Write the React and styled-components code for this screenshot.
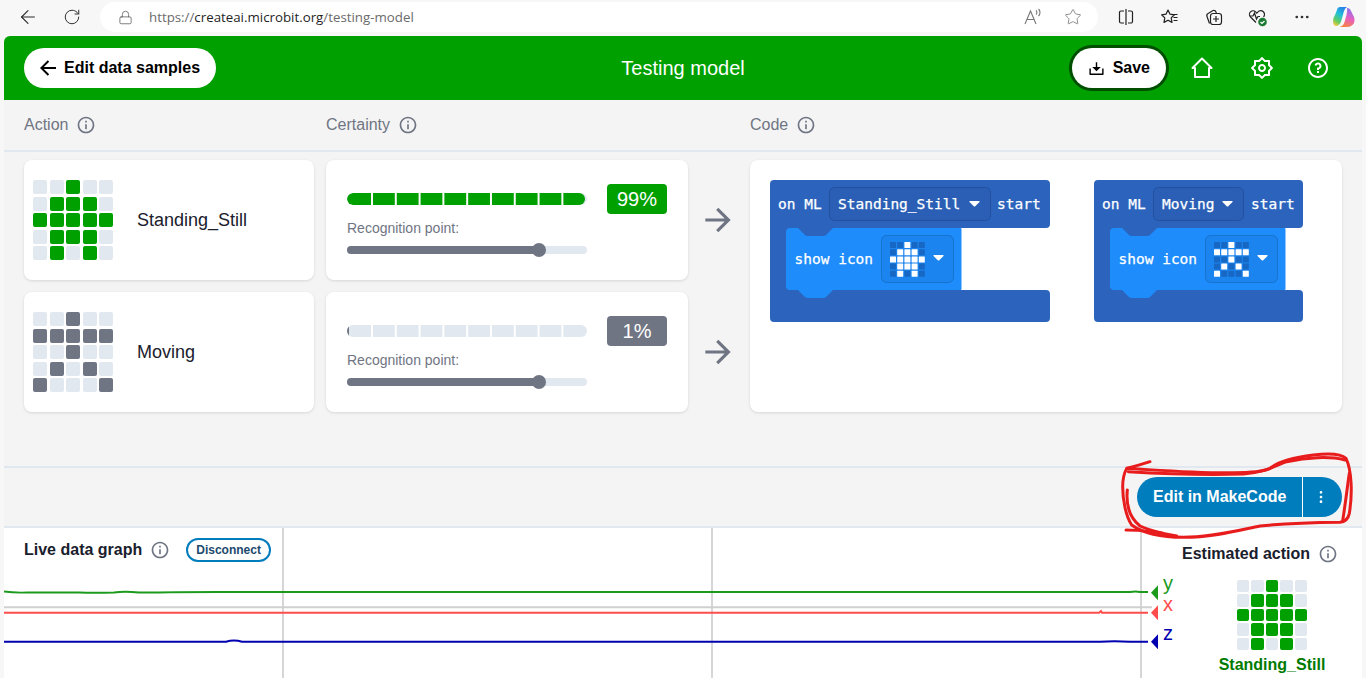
import React from "react";
import styled, { createGlobalStyle } from "styled-components";
import {
  RiArrowLeftLine,
  RiArrowRightLine,
  RiDownload2Line,
  RiInformationLine,
  RiMore2Fill,
  RiQuestionLine,
  RiSettings2Line,
} from "react-icons/ri";
import { ArrowLeft, Ellipsis, Lock, RotateCw, Star } from "lucide-react";

const GREEN = "#00a000";
const GREY = "#6f7583";
const OFF = "#e2e8f0";
const BLUE = "#007dbc";

const standing = ["..#..", ".###.", "#####", ".###.", ".#.#."];
const moving = ["..#..", "#####", "..#..", ".#.#.", "#...#"];

const GlobalStyle = createGlobalStyle`
  html, body {
    margin: 0;
    height: 100%;
    overflow: hidden;
    background: #f7f7f7;
    font-family: "Liberation Sans", Arial, sans-serif;
  }
  #root {
    height: 100%;
  }
`;

const Page = styled.div`
  display: flex;
  flex-direction: column;
  height: 100%;
  overflow: hidden;
`;

/* browser chrome */
const Chrome = styled.div`
  display: flex;
  align-items: center;
  flex: 0 0 36px;
  height: 36px;
  padding-bottom: 2px;
  box-sizing: border-box;
  color: #2b2b2b;
`;

const ChromeButton = styled.div`
  display: flex;
  align-items: center;
  justify-content: center;
  flex: 0 0 ${(p) => p.$w || 44}px;
  height: 30px;
`;

const NavGroup = styled.div`
  display: flex;
  flex: 0 0 100px;
  padding-left: 6px;
  box-sizing: border-box;
`;

const UrlPill = styled.div`
  display: flex;
  align-items: center;
  flex: 0 0 998px;
  height: 30px;
  background: #fff;
  border-radius: 15px;
  padding-left: 18px;
  box-sizing: border-box;
  color: #555;
`;

const UrlText = styled.div`
  font-family: "Open Sans", sans-serif;
  font-size: 13.3px;
  margin-left: 16px;
  color: #6b6b6b;
  flex: 1;
  b {
    font-weight: 400;
    color: #1f1f1f;
  }
`;

const PillTools = styled.div`
  display: flex;
  align-items: center;
  margin-right: 5px;
`;

const ChromeTools = styled.div`
  display: flex;
  align-items: center;
  padding-left: 6px;
`;

/* app frame */
const Frame = styled.div`
  display: flex;
  flex-direction: column;
  flex: 1;
  margin: 0 4px;
  min-height: 0;
  background: #f4f4f4;
  border-radius: 6px 6px 0 0;
  overflow: hidden;
`;

const Header = styled.header`
  display: flex;
  align-items: center;
  justify-content: space-between;
  position: relative;
  flex: 0 0 64px;
  padding: 0 12px 0 20px;
  background: ${GREEN};
  color: #fff;
`;

const Title = styled.h1`
  position: absolute;
  left: 0;
  right: 0;
  margin: 0;
  text-align: center;
  font-size: 20px;
  font-weight: 400;
  pointer-events: none;
`;

const PillButton = styled.button`
  display: flex;
  align-items: center;
  gap: ${(p) => p.$gap}px;
  height: 40px;
  padding: 0 16px 0 ${(p) => p.$left}px;
  border: 0;
  border-radius: 20px;
  background: #fff;
  color: #000;
  font: bold 16px "Liberation Sans", Arial, sans-serif;
  box-shadow: ${(p) => (p.$focus ? "0 0 0 3px #004f00" : "none")};
`;

const HeaderTools = styled.div`
  display: flex;
  align-items: center;
`;

const HeaderIcon = styled.div`
  display: flex;
  align-items: center;
  justify-content: center;
  width: ${(p) => p.$w}px;
  color: #fff;
`;

const Columns = styled.div`
  display: flex;
  align-items: center;
  flex: 0 0 50px;
  padding-left: 20px;
  border-bottom: 2px solid ${OFF};
`;

const ColumnTitle = styled.div`
  display: flex;
  align-items: center;
  gap: 8px;
  flex: 0 0 ${(p) => p.$w}px;
  font-size: 16px;
  color: ${GREY};
`;

const Main = styled.div`
  display: flex;
  flex: 0 0 306px;
  padding: 8px 20px 0;
  border-bottom: 2px solid ${OFF};
`;

const Rows = styled.div`
  display: flex;
  flex-direction: column;
  gap: 12px;
`;

const Row = styled.div`
  display: flex;
  gap: 12px;
  height: 120px;
`;

const Card = styled.div`
  background: #fff;
  border-radius: 8px;
  box-shadow: 0 1px 3px rgba(0, 0, 0, 0.12);
`;

const ActionCard = styled(Card)`
  display: flex;
  align-items: center;
  gap: 24px;
  width: 290px;
  padding-left: 9px;
  box-sizing: border-box;
  font-size: 18px;
  color: #1a202c;
`;

const LedGrid = styled.div`
  display: grid;
  grid-template-columns: repeat(5, 1fr);
  grid-template-rows: repeat(5, 1fr);
  gap: ${(p) => p.$gap}px;
  width: ${(p) => p.$size}px;
  height: ${(p) => p.$size}px;
  margin-top: ${(p) => p.$top || 0}px;
`;

const Led = styled.span`
  border-radius: 2px;
  background: ${(p) => (p.$on ? p.$color : OFF)};
`;

const CertaintyCard = styled(Card)`
  display: flex;
  align-items: flex-start;
  gap: 20px;
  width: 362px;
  padding: 24px 21px;
  box-sizing: border-box;
`;

const Meter = styled.div`
  width: 240px;
  padding-top: 9px;
`;

const Bar = styled.div`
  position: relative;
  height: 12px;
  border-radius: 6px;
  background: ${OFF};
  overflow: hidden;

  &::after {
    content: "";
    position: absolute;
    top: 0;
    bottom: 0;
    left: 24px;
    right: 4px;
    background: linear-gradient(90deg, #fff 2px, transparent 2px) 0 0 / 23.8px 100%;
  }
`;

const BarFill = styled.div`
  height: 100%;
  border-radius: 6px;
  background: ${(p) => p.$color};
`;

const PointLabel = styled.div`
  margin-top: 15px;
  font-size: 14px;
  line-height: 16px;
  color: ${GREY};
`;

const Slider = styled.div`
  position: relative;
  margin-top: 10px;
  height: 8px;
  border-radius: 4px;
  background: ${OFF};
`;

const SliderFill = styled.div`
  height: 100%;
  border-radius: 4px;
  background: ${GREY};
`;

const Thumb = styled.span`
  position: absolute;
  top: -3px;
  width: 14px;
  height: 14px;
  margin-left: -7px;
  border-radius: 50%;
  background: ${GREY};
`;

const Percent = styled.div`
  display: flex;
  align-items: center;
  justify-content: center;
  flex: 0 0 60px;
  height: 30px;
  border-radius: 4px;
  background: ${(p) => p.$color};
  color: #fff;
  font-size: 20px;
`;

const ArrowSlot = styled.div`
  display: flex;
  align-items: center;
  justify-content: center;
  width: 38px;
  margin-left: -1px;
  margin-right: 13px;
  color: ${GREY};
`;

const CodeCard = styled(Card)`
  display: flex;
  align-items: flex-start;
  gap: 44px;
  width: 592px;
  height: 252px;
  padding: 20px;
  box-sizing: border-box;
`;

/* MakeCode blocks */
const BlockSvg = styled.svg`
  flex: none;
`;

const BlockText = styled.text`
  font-family: "DejaVu Sans Mono", monospace;
  font-size: 14.5px;
  fill: #fff;
  stroke: #fff;
  stroke-width: 0.25px;
`;

const ActionBar = styled.div`
  display: flex;
  align-items: center;
  justify-content: flex-end;
  position: relative;
  flex: 0 0 58px;
  padding-right: 20px;
  border-bottom: 2px solid ${OFF};
`;

const SplitButton = styled.div`
  display: flex;
  height: 40px;
  border-radius: 20px;
  background: ${BLUE};
  color: #fff;
  font-size: 16px;
  font-weight: bold;
`;

const SplitMain = styled.div`
  display: flex;
  align-items: center;
  padding: 0 16px;
  width: 166px;
  box-sizing: border-box;
  white-space: nowrap;
  border-right: 1px solid #fff;
`;

const SplitMenu = styled.div`
  display: flex;
  align-items: center;
  justify-content: center;
  width: 39px;
  padding-right: 4px;
  box-sizing: border-box;
`;

const Scribble = styled.svg`
  position: absolute;
  right: -4px;
  top: -18px;
  z-index: 5;
  pointer-events: none;
`;

const Bottom = styled.div`
  display: flex;
  flex: 1;
  min-height: 0;
  background: #fff;
`;

const GraphPane = styled.div`
  position: relative;
  flex: 1;
`;

const Chart = styled.svg`
  position: absolute;
  left: 0;
  top: 0;
  overflow: visible;
`;

const AxisLabel = styled.text`
  font-family: "Liberation Sans", sans-serif;
  font-size: 20px;
`;

const GraphHead = styled.div`
  display: flex;
  align-items: center;
  position: relative;
  height: 44px;
  padding-left: 20px;
`;

const BoldTitle = styled.div`
  font-size: 16px;
  font-weight: bold;
  color: #1a202c;
`;

const InfoSlot = styled.div`
  display: flex;
  margin-left: 8px;
  color: ${GREY};
`;

const Disconnect = styled.button`
  height: 24px;
  margin-left: 16px;
  padding: 0 8px;
  border: 2px solid ${BLUE};
  border-radius: 12px;
  background: #fff;
  color: #1c4a6e;
  font: bold 12px "Liberation Sans", Arial, sans-serif;
`;

const Estimate = styled.div`
  display: flex;
  flex-direction: column;
  align-items: center;
  position: relative;
  flex: 0 0 221px;
  padding: 16px 0 0 41px;
  box-sizing: border-box;
`;

const EstimateHead = styled.div`
  display: flex;
  align-items: center;
  align-self: flex-start;
  height: 20px;
`;

const EstimateLabel = styled.div`
  margin-top: 6px;
  font-size: 16px;
  font-weight: bold;
  color: #007a00;
`;

const Leds = ({ rows, color, size = 80, gap = 2.5, top }) => (
  <LedGrid $size={size} $gap={gap} $top={top}>
    {rows.join("").split("").map((c, i) => (
      <Led key={i} $on={c === "#"} $color={color} />
    ))}
  </LedGrid>
);

const Info = () => <RiInformationLine size={20} />;

const Caret = ({ x, y }) => (
  <path d={`M${x} ${y} h9 q1 0 .5 1 l-4 4 q-1 1 -2 0 l-4 -4 q-.5 -1 .5 -1z`} fill="#fff" />
);

const Block = ({ label, rows, width, dropWidth, startX }) => {
  const dropEnd = 59 + dropWidth;
  return (
    <BlockSvg width={width} height={142} viewBox={`0 0 ${width} 142`}>
      <path
        d={`M4 0H${width - 4}a4 4 0 0 1 4 4V44a4 4 0 0 1-4 4H63V56H20V110H${width - 4}a4 4 0 0 1 4 4V138a4 4 0 0 1-4 4H4a4 4 0 0 1-4-4V4a4 4 0 0 1 4-4z`}
        fill="#2c63bd"
      />
      <rect x="59.5" y="7.5" width={dropWidth} height="33" rx="5" fill="#2b5fb5" stroke="#23509f" />
      <BlockText x="8" y="29">on ML</BlockText>
      <BlockText x="68" y="29">{label}</BlockText>
      <Caret x={dropEnd - 20} y={21} />
      <BlockText x={startX} y="29">start</BlockText>
      <g transform="translate(16 48)">
        <path
          d="M4 0H12L19 7Q20 8 22 8H37Q39 8 40 7L47 0H174.500a1 1 0 0 1 1 1V61a1 1 0 0 1-1 1H47L40 69Q39 70 37 70H22Q20 70 19 69L12 62H4a4 4 0 0 1-4-4V4a4 4 0 0 1 4-4z"
          fill="#1e8cfb"
        />
        <BlockText x="8.500" y="36">show icon</BlockText>
        <rect x="95.500" y="7.500" width="72" height="47" rx="5" fill="#1c84ee" stroke="#1873cc" />
        {rows.map((r, y) =>
          r.split("").map((c, x) => (
            <rect
              key={`${x}-${y}`}
              x={104 + x * 7.2}
              y={14 + y * 7.2}
              width="6"
              height="6"
              rx="0.5"
              fill={c === "#" ? "#fff" : "#1768c4"}
            />
          ))
        )}
        <Caret x={148} y={27} />
      </g>
    </BlockSvg>
  );
};

const Home = () => (
  <svg width="24" height="24" viewBox="0 0 24 24" fill="none" stroke="#fff" strokeWidth="2">
    <path d="M12 2.500 21.500 12H19V21H5V12H2.500Z" strokeLinejoin="round" />
  </svg>
);

const ReadAloud = () => (
  <svg width="20" height="20" viewBox="0 0 20 20" fill="none" stroke="#777" strokeWidth="1.1">
    <path d="M2 17 7.500 4l5.500 13M4 12.500h7" />
    <path d="M13 3.500c1.200 1 1.200 3 0 4M15.500 2c2 2 2 5 0 7" />
  </svg>
);

const SplitView = () => (
  <svg width="18" height="18" viewBox="0 0 18 18" fill="none" stroke="#222" strokeWidth="1.2">
    <path d="M9 1v16M7 3H4a1.500 1.500 0 0 0-1.500 1.500v9A1.500 1.500 0 0 0 4 15h3M11 3h3a1.500 1.500 0 0 1 1.500 1.500v9A1.500 1.500 0 0 1 14 15h-3" />
  </svg>
);

const Favourites = () => (
  <svg width="20" height="20" viewBox="0 0 20 20" fill="none" stroke="#222" strokeWidth="1.2">
    <path d="M8 3l2 4.200 4.400.6-3.200 3.100.8 4.500L8 13.200 4 15.400l.8-4.500L1.600 7.800 6 7.200z" strokeLinejoin="round" />
    <path d="M13 7.500h4.500M13.500 10.500h4M13.500 13.500h4" />
  </svg>
);

const Collections = () => (
  <svg width="20" height="20" viewBox="0 0 20 20" fill="none" stroke="#222" strokeWidth="1.2">
    <path d="M5.500 16.500 3 9.500a2.500 2.500 0 0 1 1.500-3.200L9 3.500a2.500 2.500 0 0 1 3 1.500l.3 1" />
    <rect x="6.500" y="6.500" width="11" height="11" rx="2.500" />
    <path d="M12 9v6M9 12h6" />
  </svg>
);

const Health = () => (
  <svg width="20" height="20" viewBox="0 0 20 20" fill="none" stroke="#222" strokeWidth="1.2">
    <path d="M8 15.500 2.500 10a3.600 3.600 0 0 1 5.100-5.100l1.200 1.200 1.200-1.200A3.600 3.600 0 0 1 15.500 10" />
    <path d="M2 9h3l1.500-3 2 6L10 9.500h2" />
    <circle cx="14.500" cy="15" r="4.300" fill="#1c7a34" stroke="none" />
    <path d="M12.500 15l1.500 1.500 2.500-2.500" stroke="#fff" />
  </svg>
);

const Copilot = () => (
  <svg width="24" height="24" viewBox="0 0 24 24">
    <defs>
      <linearGradient id="cpA" x1="0.7" y1="0" x2="0.2" y2="1">
        <stop offset="0" stopColor="#2b7fe8" />
        <stop offset="0.4" stopColor="#20c0d8" />
        <stop offset="0.75" stopColor="#62cc62" />
        <stop offset="1" stopColor="#f4c93c" />
      </linearGradient>
      <linearGradient id="cpB" x1="0.6" y1="0" x2="0.3" y2="1">
        <stop offset="0" stopColor="#8a6ff0" />
        <stop offset="0.5" stopColor="#e85fc0" />
        <stop offset="1" stopColor="#f8843c" />
      </linearGradient>
    </defs>
    <path d="M8 2h7q-2 1-3 4l-2.500 9q-1 5-5 6H4q-3-.5-3-5 0-3 2-6l2-5q.5-3 3-3z" fill="url(#cpA)" />
    <path d="M15 3q3 0 4 3l3 6q1.500 5-1 7.500T15 22H7.500q4-1 5-5l2-7q1-4 .5-7z" fill="url(#cpB)" />
  </svg>
);

const Marker = ({ y, color, letter, textY }) => (
  <>
    <path d={`M1154 ${y - 7.5}V${y + 7.5}L1147 ${y}z`} fill={color} />
    <AxisLabel x="1159" y={textY} fill={color}>{letter}</AxisLabel>
  </>
);

const CertaintyRow = ({ name, rows, value, color }) => (
  <Row>
    <ActionCard>
      <Leds rows={rows} color={color} />
      {name}
    </ActionCard>
    <CertaintyCard>
      <Meter>
        <Bar>
          <BarFill $color={color} style={{ width: `${value}%` }} />
        </Bar>
        <PointLabel>Recognition point:</PointLabel>
        <Slider>
          <SliderFill style={{ width: "80%" }} />
          <Thumb style={{ left: "80%" }} />
        </Slider>
      </Meter>
      <Percent $color={color}>{value}%</Percent>
    </CertaintyCard>
    <ArrowSlot>
      <RiArrowRightLine size={42} />
    </ArrowSlot>
  </Row>
);

export default function App() {
  return (
    <Page>
      <GlobalStyle />
      <Chrome>
        <NavGroup>
          <ChromeButton><ArrowLeft size={22} strokeWidth={1.2} /></ChromeButton>
          <ChromeButton><RotateCw size={18} strokeWidth={1.3} /></ChromeButton>
        </NavGroup>
        <UrlPill>
          <Lock size={15} strokeWidth={1.2} />
          <UrlText>
            https://<b>createai.microbit.org</b>/testing-model
          </UrlText>
          <PillTools>
            <ChromeButton $w={40}><ReadAloud /></ChromeButton>
            <ChromeButton $w={40}><Star size={18} strokeWidth={1.1} color="#777" /></ChromeButton>
          </PillTools>
        </UrlPill>
        <ChromeTools>
          <ChromeButton><SplitView /></ChromeButton>
          <ChromeButton><Favourites /></ChromeButton>
          <ChromeButton><Collections /></ChromeButton>
          <ChromeButton><Health /></ChromeButton>
          <ChromeButton><Ellipsis size={18} strokeWidth={1.6} /></ChromeButton>
          <ChromeButton $w={40}><Copilot /></ChromeButton>
        </ChromeTools>
      </Chrome>

      <Frame>
        <Header>
          <PillButton $gap={4} $left={12}>
            <RiArrowLeftLine size={24} />
            Edit data samples
          </PillButton>
          <Title>Testing model</Title>
          <HeaderTools>
            <PillButton $focus $gap={8} $left={16}>
              <RiDownload2Line size={17} />
              Save
            </PillButton>
            <HeaderIcon $w={72}><Home /></HeaderIcon>
            <HeaderIcon $w={48}><RiSettings2Line size={24} /></HeaderIcon>
            <HeaderIcon $w={64}><RiQuestionLine size={24} /></HeaderIcon>
          </HeaderTools>
        </Header>

        <Columns>
          <ColumnTitle $w={302}>Action <Info /></ColumnTitle>
          <ColumnTitle $w={424}>Certainty <Info /></ColumnTitle>
          <ColumnTitle $w={120}>Code <Info /></ColumnTitle>
        </Columns>

        <Main>
          <Rows>
            <CertaintyRow name="Standing_Still" rows={standing} value={99} color={GREEN} />
            <CertaintyRow name="Moving" rows={moving} value={1} color={GREY} />
          </Rows>
          <CodeCard>
            <Block label="Standing_Still" rows={standing} width={280} dropWidth={161} startX={227} />
            <Block label="Moving" rows={moving} width={209} dropWidth={90} startX={157} />
          </CodeCard>
        </Main>

        <ActionBar>
          <SplitButton>
            <SplitMain>Edit in MakeCode</SplitMain>
            <SplitMenu><RiMore2Fill size={16} /></SplitMenu>
          </SplitButton>
          <Scribble
            width="266"
            height="90"
            viewBox="0 0 798 270"
            fill="none"
            stroke="#e81c1c"
            strokeWidth="9"
            strokeLinecap="round"
            strokeLinejoin="round"
          >
            <path d="M150 35C120 45 100 50 80 55C200 62 300 70 400 68C450 68 490 65 510 55C535 35 580 22 640 15C680 10 720 8 738 25C755 60 758 130 748 190C745 205 735 215 720 217C640 218 560 220 480 228C420 240 340 262 250 262C190 262 130 250 95 225C78 200 68 150 68 110C68 85 72 70 80 55" />
            <path d="M85 65C200 72 320 75 430 72C490 68 520 50 560 35C620 22 690 18 735 30" />
            <path d="M748 70C742 110 735 170 728 212" />
            <path d="M82 120C78 160 85 200 120 228C140 238 170 245 190 250" />
            <path d="M78 240C120 240 170 245 230 258" />
          </Scribble>
        </ActionBar>

        <Bottom>
          <GraphPane>
            <Chart width="1137" height="150" fill="none">
              <path d="M279 0V150M708 0V150M1137 0V150" stroke="#ccc" strokeWidth="1.6" />
              <path d="M0 79.300H1148" stroke="#d0d0d0" strokeWidth="2" />
              <path
                d="M0 63.500Q10 65 24 64.500H75Q90 65 110 64.500Q120 63 135 64.500H150Q165 64 215 64H700Q1000 64 1126 64Q1132 63 1136 64H1144"
                stroke="#1c9a1c"
                strokeWidth="2"
              />
              <path d="M0 84.700H1095L1097 83L1098 84.700H1144" stroke="#ff4d4d" strokeWidth="2" />
              <path d="M0 113.700H222Q230 111.500 238 113.700H1096Q1110 112.700 1126 113.700H1144" stroke="#0000b0" strokeWidth="2" />
              <Marker y={64.7} color="#1c9a1c" letter="y" textY={62} />
              <Marker y={84.7} color="#ff4d4d" letter="x" textY={83} />
              <Marker y={113.7} color="#0000b0" letter="z" textY={112} />
            </Chart>
            <GraphHead>
              <BoldTitle>Live data graph</BoldTitle>
              <InfoSlot><Info /></InfoSlot>
              <Disconnect>Disconnect</Disconnect>
            </GraphHead>
          </GraphPane>
          <Estimate>
            <EstimateHead>
              <BoldTitle>Estimated action</BoldTitle>
              <InfoSlot><Info /></InfoSlot>
            </EstimateHead>
            <Leds rows={standing} color={GREEN} size={70} gap={2} top={16} />
            <EstimateLabel>Standing_Still</EstimateLabel>
          </Estimate>
        </Bottom>
      </Frame>
    </Page>
  );
}
